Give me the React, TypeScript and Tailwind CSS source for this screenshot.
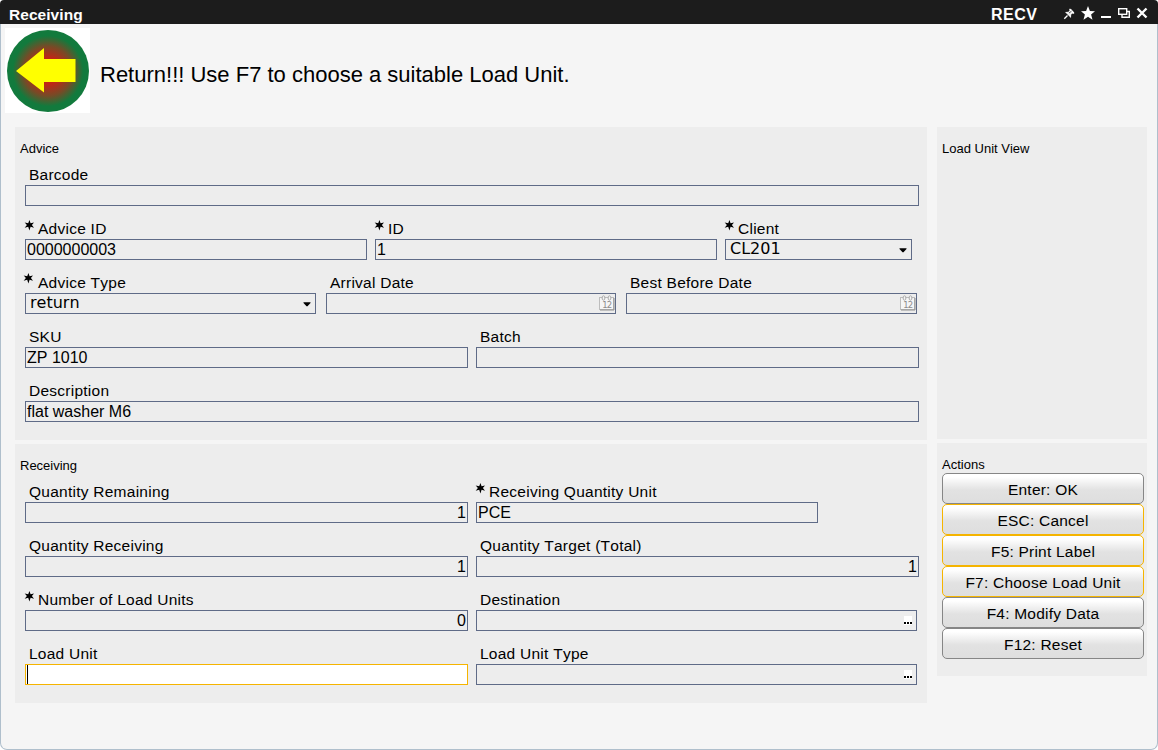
import type { ReactNode } from "react";

function RequiredStar({ className = "" }: { className?: string }) {
  return (
    <svg width="10" height="11" viewBox="0 0 10 11" className={`mr-[4px] mb-[7px] -ml-[5px] shrink-0 ${className}`}>
      <path d="M5.4 0 L6.6 3.3 L10 2.4 L7.9 5 L10 7.8 L6.6 6.8 L5.4 10.4 L4.2 6.8 L0.7 7.8 L2.9 5 L0.7 2.4 L4.2 3.3 Z" fill="#000" />
    </svg>
  );
}

function CalendarIcon() {
  return (
    <svg width="16" height="16" viewBox="0 0 16 16" className="shrink-0">
      <rect x="0.5" y="2.5" width="14" height="12" fill="#f6f6f6" stroke="#bdbdbd" />
      <path d="M15 3 V15 H1" fill="none" stroke="#8f8f8f" />
      <path d="M5 2.5 H11" stroke="#bdbdbd" />
      <ellipse cx="4.5" cy="3" rx="1.4" ry="2.2" fill="#f4f4f4" stroke="#aaa" />
      <ellipse cx="10.5" cy="3" rx="1.4" ry="2.2" fill="#f4f4f4" stroke="#aaa" />
      <text x="3.2" y="13" fontSize="8.5" fontFamily="DejaVu Sans, sans-serif" fill="#8c8c8c" textLength="10">12</text>
    </svg>
  );
}

type FieldProps = {
  label: string;
  width: string;
  value?: string;
  required?: boolean;
  right?: boolean;
  kind?: "text" | "select" | "date" | "lookup" | "focus";
  starClass?: string;
};

function Field({ label, width, value = "", required, right, kind = "text", starClass }: FieldProps) {
  return (
    <div className={`flex h-[54px] flex-col ${width}`}>
      <div className="flex h-[33px] items-end pb-px pl-[4px]">
        {required && <RequiredStar className={starClass} />}
        <span className="text-[15.5px] leading-[18px] tracking-[0.25px] whitespace-pre">{label}</span>
      </div>
      <div
        className={`flex h-[21px] border ${kind === "focus" ? "border-[#f5b400] bg-white" : "border-[#5f6b87] bg-[#ededed]"} ${
          right ? "justify-end pr-px" : "justify-between"
        }`}
      >
        {kind === "focus" ? (
          <span className="ml-px h-[19px] w-px bg-black" />
        ) : kind === "select" ? (
          <span className="pl-[4px] font-['DejaVu_Sans',sans-serif] text-[16px] leading-[17px]">{value}</span>
        ) : (
          <span className="pl-px text-[16px] leading-[19px]">{value}</span>
        )}
        {kind === "select" && (
          <svg width="8" height="5" viewBox="0 0 8 5" className="mt-[8px] mr-[4px]">
            <path d="M0.5 0.2 H7.5 V1 L4.5 4.2 H3.5 L0.5 1 Z" fill="#000" />
          </svg>
        )}
        {kind === "date" && (
          <span className="mt-px">
            <CalendarIcon />
          </span>
        )}
        {kind === "lookup" && (
          <span className="mt-[5px] mr-[4px] flex h-[9px] w-[8px] items-end justify-between bg-white pb-px">
            <i className="h-[2px] w-[2px] bg-black" />
            <i className="h-[2px] w-[2px] bg-black" />
            <i className="h-[2px] w-[2px] bg-black" />
          </span>
        )}
      </div>
    </div>
  );
}

function Panel({ title, className, children }: { title: string; className: string; children?: ReactNode }) {
  return (
    <section className={`bg-[#ededed] ${className}`}>
      <h2 className="h-[15px] pl-[5px] text-[13px] leading-[15px]">{title}</h2>
      {children}
    </section>
  );
}

function Action({ label, highlight }: { label: string; highlight?: boolean }) {
  return (
    <button
      className={`block h-[31px] w-[202px] rounded-[5px] border bg-linear-to-b from-white from-10% via-[#e2e2e2] via-55% to-[#dedede] text-[15.5px] leading-[31px] tracking-[0.22px] ${
        highlight ? "border-[#f5b400]" : "border-[#868686]"
      }`}
    >
      {label}
    </button>
  );
}

function ReturnSign() {
  return (
    <svg width="85" height="85" viewBox="0 0 85 85" className="shrink-0 bg-white">
      <defs>
        <radialGradient id="sign">
          <stop offset="0" stopColor="#ee0c0c" />
          <stop offset="0.35" stopColor="#b82a18" />
          <stop offset="0.6" stopColor="#784a26" />
          <stop offset="0.86" stopColor="#127a3d" />
          <stop offset="1" stopColor="#127a3d" />
        </radialGradient>
      </defs>
      <circle cx="43" cy="43" r="41" fill="url(#sign)" />
      <path d="M11 43 L39 20 V31 H70.5 V54 H39 V64.5 Z" fill="#ff0" />
    </svg>
  );
}

function WindowIcons() {
  return (
    <svg width="90" height="24" viewBox="1062 0 90 24">
      <path d="M1064.3 18.7 L1067.5 15.5" stroke="#fff" strokeWidth="1.3" />
      <path d="M1065 12 L1068.5 11.8 L1070.8 8.8 L1074.2 12.4 L1071.2 14.6 L1071 18 Z" fill="#f0f0f0" />
      <path d="M1069.5 9 L1074 13.5" stroke="#fff" strokeWidth="1.2" />
      <path d="M1069 13 L1071.5 11.2" stroke="#555" />
      <path d="M1088 6 L1089.9 11 L1095 11.2 L1091.1 14.5 L1092.5 19.7 L1088 16.8 L1083.5 19.7 L1084.9 14.5 L1081 11.2 L1086.1 11 Z" fill="#fff" />
      <path d="M1101 17 H1111" stroke="#fff" strokeWidth="2" />
      <path d="M1122 15 V17.3 H1129.3 V11.5 H1127" fill="none" stroke="#fff" strokeWidth="1.4" />
      <rect x="1118.7" y="8.7" width="8" height="5.6" fill="#1c1c1c" stroke="#fff" strokeWidth="1.4" />
      <path d="M1137.5 8.5 L1146.5 17.5 M1146.5 8.5 L1137.5 17.5" stroke="#fff" strokeWidth="2.4" />
    </svg>
  );
}

export default function App() {
  return (
    <div className="flex h-[750px] w-[1158px] flex-col bg-white font-['Liberation_Sans',Arial,sans-serif] text-black [font-kerning:none]">
      <header className="flex h-[24px] shrink-0 rounded-t-[4px] bg-[#1c1c1c] pt-[6px] pl-[9px] text-white">
        <span className="text-[15.5px] leading-[18px] font-bold tracking-[0.05px]">Receiving</span>
        <span className="ml-auto w-[71px] text-[16px] leading-[18px] font-bold tracking-[0.5px]">RECV</span>
        <span className="-mt-[6px] mr-[6px]">
          <WindowIcons />
        </span>
      </header>
      <main className="flex grow flex-col rounded-b-[7px] border border-t-0 border-[#afbfcc] bg-[#f5f5f5]">
        <div className="flex pt-[4px] pl-[4px]">
          <ReturnSign />
          <p className="pt-[34px] pl-[10px] text-[22px] leading-[26px]">Return!!! Use F7 to choose a suitable Load Unit.</p>
        </div>
        <div className="flex gap-[10px] pt-[14px] pl-[14px]">
          <div className="flex w-[912px] flex-col gap-[4px]">
            <Panel title="Advice" className="h-[313px] pt-[14px]">
              <div className="-mt-[4px] pl-[10px]">
                <div className="flex">
                  <Field label="Barcode" width="w-[894px]" />
                </div>
                <div className="flex gap-[8px]">
                  <Field label="Advice ID" width="w-[342px]" value="0000000003" required />
                  <Field label="ID" width="w-[342px]" value="1" required />
                  <Field label="Client" width="w-[187px]" value="CL201" required kind="select" />
                </div>
                <div className="flex gap-[10px]">
                  <Field label="Advice Type" width="w-[291px]" value="return" required kind="select" starClass="-translate-x-px -translate-y-px" />
                  <Field label="Arrival Date" width="w-[290px]" kind="date" />
                  <Field label="Best Before Date" width="w-[291px]" kind="date" />
                </div>
                <div className="flex gap-[8px]">
                  <Field label="SKU" width="w-[443px]" value="ZP 1010" />
                  <Field label="Batch" width="w-[443px]" />
                </div>
                <div className="flex">
                  <Field label="Description" width="w-[894px]" value="flat washer M6" />
                </div>
              </div>
            </Panel>
            <Panel title="Receiving" className="h-[259px] pt-[14px]">
              <div className="-mt-[4px] pl-[10px]">
                <div className="flex gap-[8px]">
                  <Field label="Quantity Remaining" width="w-[443px]" value="1" right />
                  <Field label="Receiving Quantity Unit" width="w-[342px]" value="PCE" required />
                </div>
                <div className="flex gap-[8px]">
                  <Field label="Quantity Receiving" width="w-[443px]" value="1" right />
                  <Field label="Quantity Target (Total)" width="w-[443px]" value="1" right />
                </div>
                <div className="flex gap-[8px]">
                  <Field label="Number of Load Units" width="w-[443px]" value="0" right required />
                  <Field label="Destination" width="w-[441px]" kind="lookup" />
                </div>
                <div className="flex gap-[8px]">
                  <Field label="Load Unit" width="w-[443px]" kind="focus" />
                  <Field label="Load Unit Type" width="w-[441px]" kind="lookup" />
                </div>
              </div>
            </Panel>
          </div>
          <aside className="flex w-[210px] flex-col gap-[4px]">
            <Panel title="Load Unit View" className="h-[312px] pt-[14px]" />
            <Panel title="Actions" className="h-[233px] pt-[14px]">
              <div className="pt-px pl-[5px]">
                <Action label="Enter: OK" />
                <Action label="ESC: Cancel" highlight />
                <Action label="F5: Print Label" highlight />
                <Action label="F7: Choose Load Unit" highlight />
                <Action label="F4: Modify Data" />
                <Action label="F12: Reset" />
              </div>
            </Panel>
          </aside>
        </div>
      </main>
    </div>
  );
}
